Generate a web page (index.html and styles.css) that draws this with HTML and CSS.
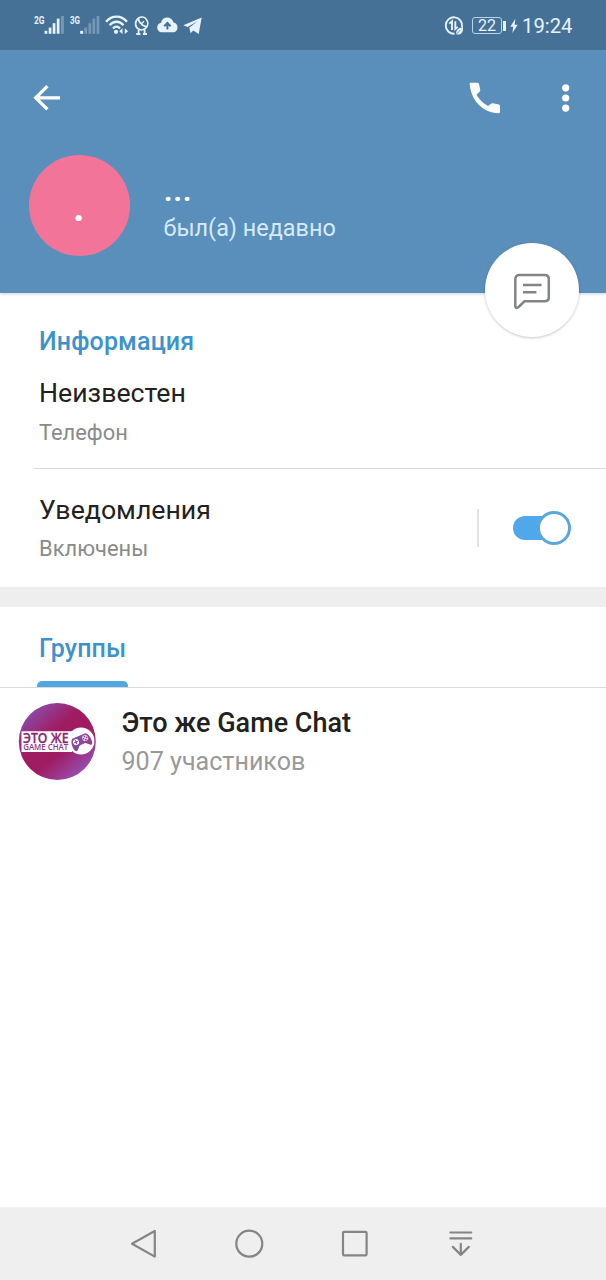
FILE: index.html
```html
<!DOCTYPE html>
<html lang="ru">
<head>
<meta charset="utf-8">
<title>Профиль</title>
<link rel="stylesheet" href="styles.css">
</head>
<body>
<div class="screen">
  <div class="status">
    <svg class="signal" width="31" height="20" viewBox="0 0 31 20">
      <text class="net" x="0" y="8.8" textLength="10.5" lengthAdjust="spacingAndGlyphs">2G</text>
      <g fill="#e6f2fc"><rect x="10.6" y="15.8" width="2.7" height="3"/><rect x="14.7" y="12.6" width="2.7" height="6.2"/><rect x="18.7" y="8.2" width="2.7" height="10.6"/><rect x="22.8" y="3.6" width="2.7" height="15.2"/><rect x="26.9" y="1" width="3" height="17.8" opacity=".3"/></g>
    </svg>
    <svg class="signal signal-second" width="31" height="20" viewBox="0 0 31 20">
      <text class="net" x="0" y="8.8" textLength="10" lengthAdjust="spacingAndGlyphs">3G</text>
      <g fill="#e6f2fc"><rect x="10.2" y="15.8" width="2.9" height="3"/><g opacity=".3"><rect x="14.4" y="12.6" width="2.7" height="6.2"/><rect x="18.5" y="8.2" width="2.7" height="10.6"/><rect x="22.5" y="3.6" width="2.7" height="15.2"/><rect x="26.6" y="1" width="2.8" height="17.8"/></g></g>
    </svg>
    <svg class="wifi" width="24" height="20" viewBox="0 0 24 20">
      <g fill="none" stroke="#e6f2fc" stroke-width="2.3"><path d="M1 6.7C7-.1 16-.1 22 6.7"/><path d="M4.6 10.2C8.6 5.6 14.6 5.6 18.5 10.2"/><path d="M8 13.5C10.2 11 12.8 11 15 13.5"/></g>
      <circle cx="11" cy="16.8" r="2.1" fill="#e6f2fc"/><path d="M14.3 16.3l3.2-3v5.7zM23 16.3l-3.2-3v5.7z" fill="#e6f2fc"/>
    </svg>
    <svg class="dish" width="16" height="21" viewBox="0 0 16 21">
      <path d="M4.4 3.2C6.9 1.2 10.4 1.6 12.3 4.2C14 6.6 14.2 9.4 12.9 11.5" fill="none" stroke="#e6f2fc" stroke-width="1.5"/>
      <path d="M4.4 3.2C.4 6.3.7 12.1 5 14.3C8 15.8 11.3 14.4 12.9 11.5Q8.6 11 7.4 8.8Q4.6 7.2 4.4 3.2z" fill="none" stroke="#e6f2fc" stroke-width="1.7" stroke-linejoin="round"/>
      <path d="M7.2 9L10 6.2" stroke="#e6f2fc" stroke-width="1.4"/>
      <path d="M4.6 14.5V18.6M10.6 14.5V18.6M2.3 19H6.4M8.9 19H13" fill="none" stroke="#e6f2fc" stroke-width="1.8"/>
    </svg>
    <svg class="cloud" width="21" height="20" viewBox="0 0 21 20">
      <path d="M5.2 17.3C2 17.3.2 15.1.2 12.5S2 8.1 4.1 7.7C4.7 4.4 7.2 2.5 10.2 2.5c3.2 0 5.7 2 6.3 5.1 2.3.3 4 2.2 4 4.8s-1.9 4.9-4.5 4.9z" fill="#e6f2fc"/>
      <path d="M10.4 14.5V8.5M7.2 11.2l3.2-3.2 3.2 3.2" fill="none" stroke="#467196" stroke-width="2"/>
    </svg>
    <svg class="plane" width="19" height="20" viewBox="0 0 19 20">
      <path d="M.3 10.2L18.7 2.6 15.7 19 10.3 15.6 7.6 18.3 6.3 12.8 14.4 6.3 4.6 12z" fill="#e6f2fc"/>
    </svg>
    <div class="status-right">
      <svg width="20" height="20" viewBox="0 0 20 20">
        <path d="M18 11A8.2 8.2 0 1 0 10.5 17.7" fill="none" stroke="#e6f2fc" stroke-width="1.9"/>
        <path d="M5.2 7.6L8 5.2V14M11.3 5.2V13l2.4-2.1" fill="none" stroke="#e6f2fc" stroke-width="1.9"/>
        <path d="M19 10.9c.4 5.1-1.6 8.2-6.9 7.6C11.7 13.8 14 12.3 19 10.9z" fill="#e6f2fc"/><path d="M11.2 19.3l5-4.9" stroke="#467196" stroke-width=".8"/>
      </svg>
      <span class="battery">22</span>
      <svg class="bolt" width="8" height="16" viewBox="0 0 8 16"><path d="M5.4.8L.3 8.7h2.9L2.4 15l5.3-8.2H4.6z" fill="#e6f2fc"/></svg>
      <span class="clock">19:24</span>
    </div>
  </div>

  <header class="header">
    <div class="toolbar">
      <svg width="28" height="28" viewBox="0 0 28 28"><path d="M27 13.8H3M14.4 2.2L2.8 13.8l11.6 11.6" fill="none" stroke="#fff" stroke-width="3.3"/></svg>
      <div class="actions">
        <svg width="32" height="32" viewBox="0 0 32 32"><path d="M1.7.7H8.6Q9.8.7 10 1.9L11.2 7.7Q11.5 8.9 10.6 9.8L7.5 12.7C10.5 17.6 14 21.2 19 23.9L22 21.7Q22.8 21.1 23.8 21.3L29.9 22.5Q31 22.7 31 23.9V30Q31 31.3 29.7 31.3C13 30.3 2.3 18.7.6 2Q.5.7 1.7.7z" fill="#fff"/></svg>
        <svg width="8" height="30" viewBox="0 0 8 30"><g fill="#fff"><circle cx="3.7" cy="4.8" r="3.6"/><circle cx="3.7" cy="15" r="3.6"/><circle cx="3.7" cy="25.1" r="3.6"/></g></svg>
      </div>
    </div>
    <div class="profile">
      <div class="avatar">.</div>
      <div class="who">
        <div class="name">...</div>
        <div class="seen">был(а) недавно</div>
      </div>
    </div>
    <div class="fab">
      <svg width="38" height="38" viewBox="0 0 38 38"><path d="M6.5 4H31.5Q35.8 4 35.8 8.2V26.3Q35.8 30.3 31.5 30.3H11.5L5.3 36.2Q2.3 38 2.3 34.8V8.2Q2.3 4 6.5 4zM10 14H28.6M10 21.2H23.4" fill="none" stroke="#828486" stroke-width="2.5"/></svg>
    </div>
  </header>

  <section class="info">
    <h2 class="title">Информация</h2>
    <div class="value">Неизвестен</div>
    <div class="label">Телефон</div>
    <div class="notify">
      <div>
        <div class="value value-notify">Уведомления</div>
        <div class="label">Включены</div>
      </div>
      <div class="switch-area"><div class="switch"><div class="track"></div><div class="knob"></div></div></div>
    </div>
  </section>

  <section class="groups">
    <div class="tabs"><div class="tab">Группы</div></div>
    <div class="chat">
      <svg width="78" height="78" viewBox="0 0 78 78">
        <defs>
          <linearGradient id="logo" x1=".12" y1=".08" x2=".88" y2=".95"><stop offset="0" stop-color="#8a4eae"/><stop offset=".38" stop-color="#a01c60"/><stop offset=".6" stop-color="#9f1c62"/><stop offset="1" stop-color="#9556bf"/></linearGradient>
          <linearGradient id="pad" x1="0" y1="0" x2="1" y2="1"><stop offset="0" stop-color="#7853ab"/><stop offset="1" stop-color="#a13b83"/></linearGradient>
        </defs>
        <circle cx="39.3" cy="38.5" r="38.5" fill="url(#logo)"/>
        <path d="M3.5 28.3H54V49H3.5z" fill="#fff"/>
        <circle cx="63" cy="38" r="13.4" fill="#fff"/>
        <text class="logo-big" x="5" y="39.8" textLength="45.5" lengthAdjust="spacingAndGlyphs">ЭТО ЖЕ</text>
        <text class="logo-small" x="5.2" y="47.2" textLength="45" lengthAdjust="spacingAndGlyphs">GAME CHAT</text>
        <g transform="rotate(-24 63 38)"><path d="M56 32.5H70C73.8 34 74 45 71.5 45.5 69 45.8 67 41.5 65.5 41.5H60.5C59 41.5 57 45.8 54.5 45.5 52 45 52.2 34 56 32.5z" fill="url(#pad)"/><circle cx="58" cy="37" r="3" fill="#fff"/><path d="M56 37h4M58 35v4" stroke="#7650a5" stroke-width="1.1"/><circle cx="68" cy="37" r="3" fill="#e8d4ed"/><g fill="#8a3e98"><circle cx="68" cy="35.3" r=".8"/><circle cx="68" cy="38.7" r=".8"/><circle cx="66.3" cy="37" r=".8"/><circle cx="69.7" cy="37" r=".8"/></g></g>
      </svg>
      <div>
        <div class="chat-name">Это же Game Chat</div>
        <div class="members">907 участников</div>
      </div>
    </div>
  </section>

  <nav class="nav">
    <svg width="30" height="30" viewBox="0 0 30 30"><path d="M25.8 2V27.6L3 14.8z"/></svg>
    <svg width="30" height="30" viewBox="0 0 30 30"><circle cx="14.3" cy="14.7" r="13"/></svg>
    <svg width="30" height="30" viewBox="0 0 30 30"><rect x="3" y="2.9" width="23.6" height="23.4" rx="1"/></svg>
    <svg width="30" height="30" viewBox="0 0 30 30"><path d="M4.4 3.5h20.8M4.4 9.4h20.8M14.8 14.8v11M6.8 17.9l8 8 8-8"/></svg>
  </nav>
</div>
</body>
</html>
```
FILE: styles.css
```css
* { box-sizing: border-box; }
body { margin: 0; font-family: Roboto, "Liberation Sans", sans-serif; }
svg { display: block; flex: none; }
.screen { width: 606px; height: 1280px; display: flex; flex-direction: column; background: #fff; overflow: hidden; }

.status { height: 50px; flex: none; display: flex; align-items: flex-start; padding: 15px 34px 0 33.5px; background: #467196; color: #e6f2fc; }
.net { font: bold 10.5px Roboto, sans-serif; fill: #e6f2fc; }
.signal-second { margin-left: 5.5px; }
.wifi { margin-left: 4px; }
.dish { margin-left: 5px; }
.cloud { margin-left: 7px; }
.plane { margin-left: 5px; }
.status-right { margin-left: auto; display: flex; align-items: center; height: 21px; }
.battery { position: relative; width: 30px; height: 17px; margin-left: 8px; border: 1.3px solid #b9d3e9; border-radius: 3px; font-size: 16px; line-height: 15.5px; text-align: center; }
.battery::after { content: ""; position: absolute; left: 30px; top: 2.5px; width: 3px; height: 10px; background: #e6f2fc; }
.bolt { margin-left: 8px; }
.clock { width: 50px; margin-left: 4px; font-size: 20.3px; line-height: 24px; white-space: nowrap; }

.header { position: relative; height: 243px; flex: none; background: #5a8fbb; box-shadow: 0 1px 3px rgba(70, 110, 150, .3); }
.toolbar { height: 95px; display: flex; align-items: center; justify-content: space-between; padding: 0 36px 0 33px; }
.actions { display: flex; align-items: center; gap: 61px; }
.profile { display: flex; padding: 10px 0 0 28.5px; }
.avatar { width: 101px; height: 101px; border-radius: 50%; background: #f37499; color: #fff; font-size: 46px; font-weight: 500; line-height: 101px; text-align: center; }
.who { padding: 18px 0 0 34px; }
.name { color: #fff; font-size: 34px; font-weight: 500; line-height: 33px; }
.seen { margin-top: 6px; color: #d7eafa; font-size: 23.4px; line-height: 32px; }
.fab { position: absolute; left: 485px; top: 193px; width: 94px; height: 94px; border-radius: 50%; background: #fff; display: flex; align-items: center; justify-content: center; box-shadow: 0 1px 3px rgba(0, 0, 0, .22); }

.info { height: 294px; flex: none; padding: 32px 0 0 39px; }
.title { margin: 0; font-size: 25px; font-weight: 500; line-height: 34px; letter-spacing: .15px; color: #3e92cc; }
.value { margin-top: 16px; font-size: 26.7px; line-height: 36px; color: #212121; }
.label { margin-top: 6px; font-size: 21.9px; line-height: 32px; color: #8a8a8a; }
.notify { display: flex; justify-content: space-between; margin: 19px 0 0 -5px; padding: 0 35px 0 5px; border-top: 1px solid #d9d9d9; }
.value-notify { margin-top: 23px; }
.notify .label { margin-top: 5px; }
.switch-area { width: 94px; height: 38px; margin-top: 40px; border-left: 2px solid #e2e2e2; display: flex; align-items: center; justify-content: flex-end; }
.switch { display: flex; align-items: center; }
.track { width: 46px; height: 24px; border-radius: 12px; background: #50a8eb; }
.knob { width: 34px; height: 34px; margin-left: -22px; border-radius: 50%; border: 3px solid #5aa7dd; background: #fff; }

.groups { flex: 1; border-top: 20px solid #eee; }
.tabs { height: 81px; border-bottom: 1px solid #d9d9d9; padding-left: 37px; display: flex; }
.tab { position: relative; width: 91px; padding: 25px 0 0 2px; font-size: 25px; font-weight: 500; line-height: 34px; letter-spacing: .15px; color: #3e92cc; }
.tab::after { content: ""; position: absolute; left: 0; bottom: 0; width: 91px; height: 6px; border-radius: 5px 5px 0 0; background: #50a8e3; }
.chat { display: flex; gap: 25.5px; padding: 15px 0 0 18px; }
.chat-name { margin-top: 2px; font-size: 27px; font-weight: 500; line-height: 36px; color: #212121; }
.members { margin-top: 4px; font-size: 25.1px; line-height: 34px; color: #999; }
.logo-big { font: 600 14.5px "Open Sans", sans-serif; fill: #8c286f; stroke: #8c286f; stroke-width: .3; }
.logo-small { font: 600 8.6px "Open Sans", sans-serif; fill: #94328b; }

.nav { height: 73px; flex: none; display: flex; justify-content: center; align-items: center; gap: 75.7px; background: #efefef; padding-right: 1px; }
.nav svg { fill: none; stroke: #858585; stroke-width: 2.2; stroke-linejoin: round; stroke-linecap: round; }
```
